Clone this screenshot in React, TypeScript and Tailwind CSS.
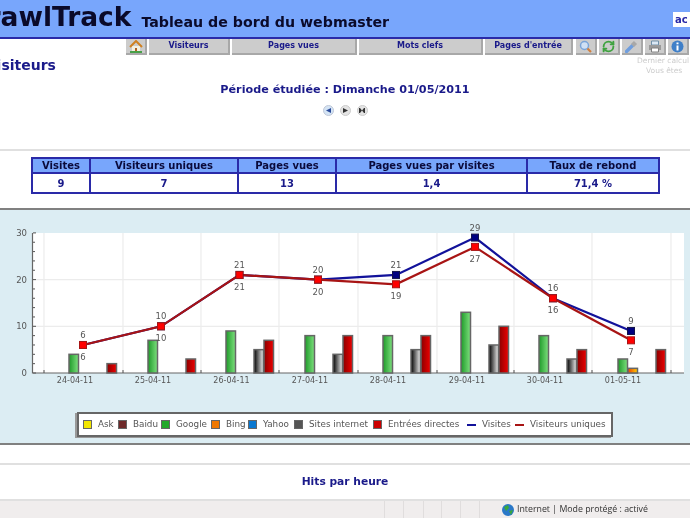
import { RefreshCw } from "lucide-react";

const navItems = [
    { label: "Visiteurs", width: "w-[81px]" },
    { label: "Pages vues", width: "w-[125px]" },
    { label: "Mots clefs", width: "w-[124px]" },
    { label: "Pages d'entrée", width: "w-[88px]" },
];

const columns = [
    { title: "Visites", value: "9", width: "w-[58px]" },
    { title: "Visiteurs uniques", value: "7", width: "w-[148px]" },
    { title: "Pages vues", value: "13", width: "w-[98px]" },
    { title: "Pages vues par visites", value: "1,4", width: "w-[191px]" },
    { title: "Taux de rebond", value: "71,4 %", width: "w-[132px]" },
];

const legend = [
    { label: "Ask", color: "bg-[#f2e600]", width: "w-[20px]" },
    { label: "Baidu", color: "bg-[#6e2a2a]", width: "w-[28px]" },
    { label: "Google", color: "bg-[#22a82a]", width: "w-[35px]" },
    { label: "Bing", color: "bg-[#f07800]", width: "w-[22px]" },
    { label: "Yahoo", color: "bg-[#0a78d0]", width: "w-[31px]" },
    { label: "Sites internet", color: "bg-[#555555]", width: "w-[64px]" },
    { label: "Entrées directes", color: "bg-[#cc0000]", width: "w-[79px]" },
];

const xs = [83, 161, 239.5, 318, 396, 475, 553, 631];
const dates = ["24-04-11", "25-04-11", "26-04-11", "27-04-11", "28-04-11", "29-04-11", "30-04-11", "01-05-11"];
const visites = [6, 10, 21, 20, 21, 29, 16, 9];
const uniques = [6, 10, 21, 20, 19, 27, 16, 7];
const grid = [44, 123, 201, 279, 358, 437, 514, 592, 671];

const bars = [
    { x: 69, v: 4, fill: "url(#green)" },
    { x: 107, v: 2, fill: "url(#red)" },
    { x: 148, v: 7, fill: "url(#green)" },
    { x: 186, v: 3, fill: "url(#red)" },
    { x: 226, v: 9, fill: "url(#green)" },
    { x: 254, v: 5, fill: "url(#grey)" },
    { x: 264, v: 7, fill: "url(#red)" },
    { x: 305, v: 8, fill: "url(#green)" },
    { x: 333, v: 4, fill: "url(#grey)" },
    { x: 343, v: 8, fill: "url(#red)" },
    { x: 383, v: 8, fill: "url(#green)" },
    { x: 411, v: 5, fill: "url(#grey)" },
    { x: 421, v: 8, fill: "url(#red)" },
    { x: 461, v: 13, fill: "url(#green)" },
    { x: 489, v: 6, fill: "url(#grey)" },
    { x: 499, v: 10, fill: "url(#red)" },
    { x: 539, v: 8, fill: "url(#green)" },
    { x: 567, v: 3, fill: "url(#grey)" },
    { x: 577, v: 5, fill: "url(#red)" },
    { x: 618, v: 3, fill: "url(#green)" },
    { x: 628, v: 1, fill: "url(#orange)" },
    { x: 656, v: 5, fill: "url(#red)" },
];

const yOf = (v: number) => 373 - v * 4.67;
const points = (data: number[]) => data.map((v, i) => `${xs[i]},${yOf(v)}`).join(" ");

const Gradient = ({ id, from, to }: { id: string; from: string; to: string }) => (
    <linearGradient id={id} x1="0" y1="0" x2="1" y2="0">
        <stop offset="0" stopColor={from} />
        <stop offset="1" stopColor={to} />
    </linearGradient>
);

const Chart = () => (
    <svg width="690" height="180" viewBox="0 210 690 180" className="block">
        <defs>
            <Gradient id="green" from="#1f9a2a" to="#7ee07e" />
            <Gradient id="red" from="#8a0000" to="#f00000" />
            <Gradient id="grey" from="#000000" to="#f0f0f0" />
            <Gradient id="orange" from="#f04000" to="#ffd000" />
        </defs>
        <rect x="33" y="233" width="651" height="140" fill="#ffffff" />
        {grid.map((x) => (
            <line key={x} x1={x} x2={x} y1="233" y2="373" stroke="#ececec" strokeWidth="1.2" />
        ))}
        {[20, 10].map((v) => (
            <line key={v} x1="33" x2="684" y1={yOf(v)} y2={yOf(v)} stroke="#ececec" strokeWidth="1.2" />
        ))}
        <path d="M32.5 233V373H684" fill="none" stroke="#666666" strokeWidth="1.2" />
        {[2, 4, 6, 8, 12, 14, 16, 18, 22, 24, 26, 28].map((v) => (
            <line key={v} x1="33" x2="35" y1={yOf(v)} y2={yOf(v)} stroke="#555555" />
        ))}
        {[0, 10, 20, 30].map((v) => (
            <g key={v}>
                <line x1="33" x2="36" y1={yOf(v)} y2={yOf(v)} stroke="#555555" />
                <text x="27" y={yOf(v) + 3} textAnchor="end" fontSize="8.5" fill="#555555" fontFamily="DejaVu Sans">
                    {v}
                </text>
            </g>
        ))}
        {grid.map((x) => (
            <line key={x} x1={x} x2={x} y1="370" y2="373" stroke="#555555" />
        ))}
        {dates.map((d, i) => (
            <text key={d} x={xs[i] - 8} y="383" textAnchor="middle" fontSize="8" fill="#555555" fontFamily="DejaVu Sans">
                {d}
            </text>
        ))}
        {bars.map((b) => (
            <rect
                key={b.x}
                x={b.x}
                y={yOf(b.v)}
                width="9.5"
                height={373 - yOf(b.v)}
                fill={b.fill}
                stroke="#666666"
                strokeWidth="1.5"
            />
        ))}
        <polyline points={points(visites)} fill="none" stroke="#12129a" strokeWidth="2.2" />
        <polyline points={points(uniques)} fill="none" stroke="#a81414" strokeWidth="2.2" />
        {visites.map((v, i) => (
            <g key={i}>
                <rect x={xs[i] - 3.5} y={yOf(v) - 3.5} width="7" height="7" fill="#000080" stroke="#12124a" />
                <text x={xs[i]} y={yOf(v) - 7} textAnchor="middle" fontSize="8.5" fill="#555555" fontFamily="DejaVu Sans">
                    {v}
                </text>
            </g>
        ))}
        {uniques.map((v, i) => (
            <g key={i}>
                <rect x={xs[i] - 3.5} y={yOf(v) - 3.5} width="7" height="7" fill="#ff0000" stroke="#a81414" />
                <text x={xs[i]} y={yOf(v) + 15} textAnchor="middle" fontSize="8.5" fill="#555555" fontFamily="DejaVu Sans">
                    {v}
                </text>
            </g>
        ))}
    </svg>
);

const NavIcon = ({ children, className = "" }: { children: React.ReactNode; className?: string }) => (
    <div className={`flex items-center justify-center w-[21px] bg-[#cccccc] border-b-2 border-r-2 border-[#a8a8a8] ${className}`}>{children}</div>
);

const App = () => (
    <div className="w-[690px] h-[518px] overflow-hidden bg-white blur-[0.6px] font-['DejaVu_Sans',sans-serif]">
        <header className="flex items-center h-[39px] bg-[#78a6fc] border-b-2 border-[#2a2aa8] overflow-hidden">
            <span className="-ml-[32px] mb-[2px] text-[26.5px] font-bold text-[#0a0a2a] leading-none whitespace-nowrap">CrawlTrack</span>
            <span className="ml-[10px] mt-[8px] text-[14.2px] font-bold text-[#0a0a2a] whitespace-nowrap">Tableau de bord du webmaster</span>
            <div className="ml-auto mt-[1px] w-[17px] h-[15px] bg-white text-[10px] font-bold text-[#2a2aa8] pl-[2px] overflow-hidden leading-[15px]">ac</div>
        </header>

        <nav className="flex h-[16px] pl-[126px] gap-[2px] text-[8px] font-bold text-[#1a1a8a]">
            <NavIcon>
                <svg width="14" height="13" viewBox="0 0 14 13">
                    <path d="M3 6H11V12H3Z" fill="#f4f0e0" />
                    <path d="M1 7L7 1L13 7" fill="none" stroke="#d08020" strokeWidth="2" />
                    <path d="M6 8H8V12H6Z" fill="#b06020" />
                    <path d="M1 11H13V13H1Z" fill="#48a048" />
                </svg>
            </NavIcon>
            {navItems.map((item) => (
                <div key={item.label} className={`flex items-center justify-center ${item.width} bg-[#cccccc] border-b-2 border-r-2 border-[#a8a8a8] whitespace-nowrap`}>
                    {item.label}
                </div>
            ))}
            <NavIcon className="ml-[1px]">
                <svg width="13" height="13" viewBox="0 0 13 13">
                    <circle cx="5.5" cy="5.5" r="4" fill="#cfe0f4" stroke="#7aa4d8" strokeWidth="1.5" />
                    <path d="M8.5 8.5L12 12" stroke="#d08040" strokeWidth="2.2" />
                </svg>
            </NavIcon>
            <NavIcon>
                <RefreshCw size={13} className="text-[#3fa23f]" strokeWidth={3.5} />
            </NavIcon>
            <NavIcon>
                <svg width="13" height="13" viewBox="0 0 13 13">
                    <path d="M1.5 11.5L7.5 5.5" stroke="#6f9ede" strokeWidth="3.4" strokeLinecap="round" />
                    <path d="M7.5 5.5L10.5 2.5" stroke="#a8a8a8" strokeWidth="4.4" />
                </svg>
            </NavIcon>
            <NavIcon>
                <svg width="14" height="13" viewBox="0 0 14 13">
                    <path d="M3.5 1H10.5V5H3.5Z" fill="#dce8f4" stroke="#7090a8" />
                    <path d="M1 5H13V10H1Z" fill="#9a9a9a" />
                    <path d="M3.5 8H10.5V12H3.5Z" fill="#ffffff" stroke="#808080" />
                </svg>
            </NavIcon>
            <NavIcon>
                <svg width="13" height="13" viewBox="0 0 13 13">
                    <circle cx="6.5" cy="6.5" r="6" fill="#3f7fc8" />
                    <path d="M5.5 2.5H7.5V4.2H5.5ZM5.5 5.5H7.5V10.5H5.5Z" fill="#ffffff" />
                </svg>
            </NavIcon>
        </nav>

        <section className="h-[94px] overflow-hidden">
            <div className="flex justify-between h-[26px]">
                <h1 className="-ml-[14px] mt-[1px] text-[14px] font-bold text-[#1a1a8a] leading-[18px]">Visiteurs</h1>
                <div className="w-[53px] overflow-hidden text-[7.5px] leading-[10px] text-[#cccccc] whitespace-nowrap pt-[1px]">
                    <div>Dernier calcul</div>
                    <div className="pl-[9px]">Vous êtes</div>
                </div>
            </div>
            <div className="mt-[2px] text-center text-[11.2px] font-bold text-[#1a1a8a] leading-[14px]">Période étudiée : Dimanche 01/05/2011</div>
            <div className="flex justify-center gap-[6px] mt-[8px]">
                <span className="flex items-center justify-center w-[11px] h-[11px] rounded-full bg-[#d4e4f4] border border-[#c0c8d8]">
                    <svg width="5" height="5" viewBox="0 0 5 5"><path d="M5 0V5L0 2.5Z" fill="#2a4a9a" /></svg>
                </span>
                <span className="flex items-center justify-center w-[11px] h-[11px] rounded-full bg-[#e4e4e4] border border-[#cccccc]">
                    <svg width="5" height="5" viewBox="0 0 5 5"><path d="M0 0V5L5 2.5Z" fill="#333333" /></svg>
                </span>
                <span className="flex items-center justify-center w-[11px] h-[11px] rounded-full bg-[#e4e4e4] border border-[#cccccc]">
                    <svg width="6" height="5" viewBox="0 0 6 5"><path d="M0 0H1V5H0ZM5 0H6V5H5ZM1 0L3 2.5L1 5ZM5 0L3 2.5L5 5Z" fill="#333333" /></svg>
                </span>
            </div>
        </section>

        <div className="h-[59px] pt-[6px] pl-[31px] border-t-2 border-[#e0e0e0]">
            <div className="flex w-max border-2 border-r-0 border-[#2a2aa8]">
                {columns.map((c) => (
                    <div key={c.title} className={`${c.width} shrink-0 border-r-2 border-[#2a2aa8] text-center font-bold`}>
                        <div className="h-[13px] bg-[#78a6fc] text-[10px] leading-[13px] text-[#0a0a3a] border-b-2 border-[#2a2aa8] box-content whitespace-nowrap">{c.title}</div>
                        <div className="h-[18px] text-[10px] leading-[19px] text-[#1a1a8a]">{c.value}</div>
                    </div>
                ))}
            </div>
        </div>

        <section className="h-[237px] bg-[#dcedf3] border-y-2 border-[#808080] overflow-hidden">
            <Chart />
            <div className="flex items-center ml-[77px] mt-[22px] w-[536px] h-[25px] pl-[4px] bg-white border-2 border-[#666666] shadow-[-2px_1px_0_#999999] text-[8.8px] text-[#555555] whitespace-nowrap">
                {legend.map((l) => (
                    <div key={l.label} className="flex items-center shrink-0">
                        <span className={`w-[9px] h-[9px] shrink-0 ${l.color} border border-[#666666] mr-[6px]`} />
                        <span className={l.width}>{l.label}</span>
                    </div>
                ))}
                <span className="shrink-0 w-[9px] h-[2px] bg-[#12129a] mr-[6px]" />
                <span className="shrink-0 w-[33px]">Visites</span>
                <span className="shrink-0 w-[9px] h-[2px] bg-[#a81414] mr-[6px]" />
                <span className="shrink-0">Visiteurs uniques</span>
            </div>
        </section>

        <div className="h-[18px]" />
        <div className="h-[38px] border-y-2 border-[#e0e0e0] text-center text-[10.7px] font-bold text-[#1a1a8a] leading-[33px]">Hits par heure</div>

        <footer className="flex h-[17px] bg-[#f0eded] text-[#333333] font-['Open_Sans',sans-serif] text-[8.8px]">
            <div className="w-[385px] border-r border-[#e0dddd]" />
            <div className="w-[19px] border-r border-[#e0dddd]" />
            <div className="w-[20px] border-r border-[#e0dddd]" />
            <div className="w-[18px] border-r border-[#e0dddd]" />
            <div className="w-[19px] border-r border-[#e0dddd]" />
            <div className="w-[19px] border-r border-[#e0dddd]" />
            <div className="flex items-center pl-[22px] gap-[3px] whitespace-nowrap">
                <svg width="12" height="12" viewBox="0 0 12 12">
                    <circle cx="6" cy="6" r="6" fill="#2a78c8" />
                    <path d="M2 3 L6 1 L7 4 L4 7 Z M7 7 L11 6 L9 11 Z" fill="#3aa83a" />
                </svg>
                <span>Internet | Mode protégé : activé</span>
            </div>
        </footer>
    </div>
);

export default App;
